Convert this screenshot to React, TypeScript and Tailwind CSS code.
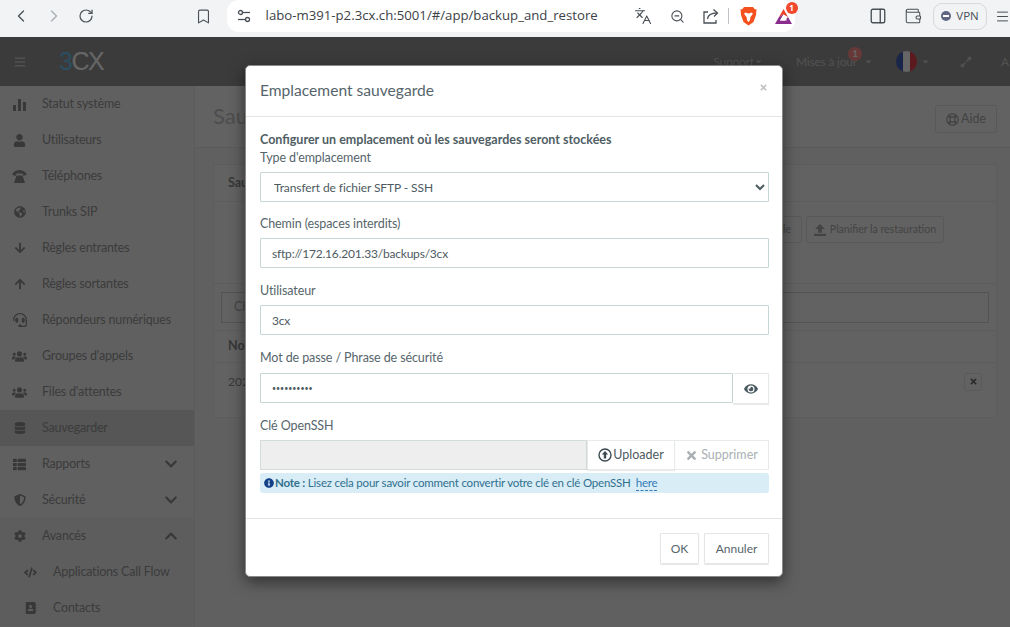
import { ReactNode } from "react";
import {
  FaArrowDown, FaArrowUp, FaChevronDown, FaChevronUp, FaCode, FaCog, FaDatabase, FaEye,
  FaGlobeAmericas, FaHeadset, FaInfoCircle, FaRegLifeRing, FaShieldAlt, FaTimes, FaUser,
  FaUsers, FaAddressBook, FaThList, FaBars, FaExpandAlt, FaCaretDown,
} from "react-icons/fa";
import { ChevronLeft, ChevronRight, RotateCw, Bookmark, Languages, ZoomOut, PanelRight, Wallet, Menu } from "lucide-react";

const PAGE_FONT = "font-['Lato','Noto_Sans',sans-serif]";

function StatsIcon() {
  return (
    <svg width="13" height="13" viewBox="0 0 13 13" fill="currentColor">
      <rect x="0" y="7" width="3" height="6" /><rect x="5" y="1" width="3" height="12" /><rect x="10" y="4" width="3" height="9" />
    </svg>
  );
}

function PhoneIcon() {
  return (
    <svg width="15" height="13" viewBox="0 0 15 13" fill="currentColor">
      <path d="M0 4.500C2 1 5 0 7.500 0S13 1 15 4.500L11.500 6 10.500 3.500h-6L3.500 6z" /><path d="M4.500 5.500h6L13 13H2z" />
    </svg>
  );
}

function UploadIcon() {
  return (
    <svg width="12" height="12" viewBox="0 0 11 11" fill="currentColor">
      <path d="M5.500 0L10 4.500H7.200V8H3.800V4.500H1z" /><rect x="0" y="9" width="11" height="2" />
    </svg>
  );
}

function UploadCircleIcon() {
  return (
    <svg width="14" height="14" viewBox="0 0 14 14">
      <circle cx="7" cy="7" r="6" fill="none" stroke="#3a4a50" strokeWidth="1.4" />
      <path d="M7 3l3.200 3.400H8.200V10.500H5.800V6.400H3.800z" fill="#3a4a50" />
    </svg>
  );
}

function SiteSettingsIcon() {
  return (
    <svg width="14" height="14" viewBox="0 0 14 14" fill="none" stroke="#4a5056" strokeWidth="1.3">
      <circle cx="3.500" cy="3.500" r="2" /><path d="M5.500 3.500H13" />
      <circle cx="10.500" cy="10.500" r="2" /><path d="M1 10.500h7.500" />
    </svg>
  );
}

function ShareIcon() {
  return (
    <svg width="18" height="18" viewBox="0 0 18 18" fill="none" stroke="#4a5056" strokeWidth="1.3">
      <path d="M6 5H2v11h12v-3" />
      <path d="M5.500 12C6 8 9 6 15 6" /><path d="M11.500 2.500L15.500 6l-3.500 3.500" />
    </svg>
  );
}

function BraveIcon() {
  return (
    <svg width="17" height="20" viewBox="0 0 17 20">
      <path d="M4 1h9l2 2.500 1.500-.5-.5 6-2.500 7-5 3.500L3.500 16 1 9 .5 3 2 3.500z" fill="#f4511e" />
      <path d="M5 6.500l3.500 1 3.500-1 .8 1.500-2.300 3-.7 3.500L8.500 16l-1.300-1.500-.7-3.500L4.200 8z" fill="#fff" />
    </svg>
  );
}

function BatIcon() {
  return (
    <svg width="19" height="17" viewBox="0 0 19 17">
      <path d="M9.500 1L18 16H1z" fill="#fff" />
      <path d="M9.500 1L14 9 9.500 6.500 5 9z" fill="#e8452c" />
      <path d="M1 16L5 9l4.500-2.500L6 12.500 11 12.500 14 9l4 7z" fill="#8b2c8f" />
      <path d="M6 12.500L9.500 6.500l3.500 6z" fill="#fff" />
    </svg>
  );
}

function NavItem({ icon, label, chevron, active, sub }: { icon: ReactNode; label: string; chevron?: "up" | "down"; active?: boolean; sub?: boolean }) {
  return (
    <div className={`flex h-9 items-center ${active ? "bg-[#d6d6d6]" : sub ? "bg-[#e9e9e9]" : ""}`}>
      <span className={`flex w-[15px] justify-center text-[#8c8c8c] ${sub ? "ml-[23px] mr-[15px]" : "ml-3 mr-[15px]"}`}>{icon}</span>
      <span className="flex-1 text-[12.5px] tracking-[-0.2px] text-[#969696]">{label}</span>
      {chevron === "down" && <FaChevronDown className="mr-4 text-[14px] text-[#8c8c8c]" />}
      {chevron === "up" && <FaChevronUp className="mr-4 text-[14px] text-[#8c8c8c]" />}
    </div>
  );
}

function Field({ label, value }: { label: string; value: string }) {
  return (
    <div>
      <div className="mb-[6px] text-[12.5px] leading-[16px] tracking-[-0.1px] text-[#56656b]">{label}</div>
      <input
        readOnly
        type="text"
        value={value}
        className="block h-[30px] w-full rounded-[1px] border border-[#c5d6d6] bg-white px-[11px] text-[12px] tracking-[-0.2px] text-[#4d5a5f] outline-none"
      />
    </div>
  );
}

export default function App() {
  return (
    <div className={`relative h-[627px] w-[1010px] overflow-hidden bg-white ${PAGE_FONT}`}>
      {/* browser toolbar */}
      <div className="flex h-[37px] items-start bg-[#f1f3f5] text-[#4a5056] font-['Open_Sans',sans-serif]">
        <div className="flex h-[32px] w-[228px] items-center">
          <ChevronLeft className="ml-[11px]" size={20} strokeWidth={1.6} />
          <ChevronRight className="ml-[13px] text-[#a8adb2]" size={20} strokeWidth={1.6} />
          <RotateCw className="ml-[14px]" size={16} strokeWidth={1.8} />
          <Bookmark className="ml-[101px]" size={17} strokeWidth={1.6} />
        </div>
        <div className="flex h-[32px] w-[572px] items-center rounded-[12px] bg-white">
          <span className="ml-[10px] flex"><SiteSettingsIcon /></span>
          <span className="ml-[15px] w-[367px] text-[13.2px] text-[#3c4146]">labo-m391-p2.3cx.ch:5001/#/app/backup_and_restore</span>
          <Languages className="ml-[1px]" size={18} strokeWidth={1.5} />
          <ZoomOut className="ml-[18px]" size={15} strokeWidth={1.8} />
          <span className="ml-[17px] flex"><ShareIcon /></span>
          <span className="ml-[8px] h-4 w-px bg-[#bfc3c7]" />
          <span className="ml-[11px] flex"><BraveIcon /></span>
          <span className="relative ml-[17px] flex">
            <BatIcon />
            <span className="absolute -right-[5px] -top-[6px] flex h-[12px] w-[12px] items-center justify-center rounded-full bg-[#f2492c] text-[8px] font-bold text-white">1</span>
          </span>
        </div>
        <div className="flex h-[32px] items-center">
          <PanelRight className="ml-[74px]" size={18} strokeWidth={1.8} />
          <Wallet className="ml-[17px]" size={18} strokeWidth={1.4} />
          <div className="ml-[11px] flex h-[27px] w-[54px] items-center justify-center gap-[5px] rounded-[9px] border border-[#d5dade] text-[11.5px]">
            <span className="relative h-[10px] w-[10px] rounded-full bg-[#5f6785]">
              <span className="absolute left-[2px] top-[4px] h-[2px] w-[6px] bg-white" />
            </span>
            VPN
          </div>
          <Menu className="ml-[8px]" size={15} strokeWidth={1.6} />
        </div>
      </div>

      {/* 3CX page, lies under the overlay */}
      <div className="flex h-[49px] items-center bg-[#939393]">
        <FaBars className="ml-[14px] text-[12px] text-[#c9c9c9]" />
        <div className="ml-[33px] text-[25px] font-normal leading-none tracking-[-1.500px] font-['Liberation_Sans',sans-serif]">
          <span className="text-[#6fc0ef]">3</span><span className="text-white">CX</span>
        </div>
        <div className="ml-auto flex items-center text-[12px] tracking-[-0.2px] text-[#cbcbcb]">
          <span>Support</span>
          <FaCaretDown className="text-[9px]" />
          <span className="relative ml-[33px]">
            Mises à jour
            <span className="absolute -right-[5px] -top-[6px] flex h-[14px] w-[14px] items-center justify-center rounded-full bg-[#ff8f8c] text-[9px] font-bold text-white">1</span>
          </span>
          <FaCaretDown className="ml-[7px] text-[9px]" />
          <span className="ml-[23px] flex h-[21px] w-[21px] overflow-hidden rounded-full">
            <span className="w-1/3 bg-[#3f5fb8]" /><span className="w-1/3 bg-white" /><span className="w-1/3 bg-[#e8424d]" />
          </span>
          <FaCaretDown className="ml-[4px] text-[9px]" />
          <FaExpandAlt className="ml-[30px] text-[12px]" />
          <span className="ml-[29px] w-[9px] overflow-hidden">A</span>
        </div>
      </div>

      <div className="flex h-[541px]">
        <aside className="w-[194px] shrink-0 bg-[#f1f1f1]">
          <NavItem icon={<StatsIcon />} label="Statut système" />
          <NavItem icon={<FaUser className="text-[13px]" />} label="Utilisateurs" />
          <NavItem icon={<PhoneIcon />} label="Téléphones" />
          <NavItem icon={<FaGlobeAmericas className="text-[12px]" />} label="Trunks SIP" />
          <NavItem icon={<FaArrowDown className="text-[12px]" />} label="Règles entrantes" />
          <NavItem icon={<FaArrowUp className="text-[12px]" />} label="Règles sortantes" />
          <NavItem icon={<FaHeadset className="text-[14px]" />} label="Répondeurs numériques" />
          <NavItem icon={<FaUsers className="text-[15px]" />} label="Groupes d'appels" />
          <NavItem icon={<FaUsers className="text-[19px]" />} label="Files d'attentes" />
          <NavItem icon={<FaDatabase className="text-[12px]" />} label="Sauvegarder" active />
          <NavItem icon={<FaThList className="text-[13px]" />} label="Rapports" chevron="down" />
          <NavItem icon={<FaShieldAlt className="text-[12px]" />} label="Sécurité" chevron="down" />
          <div className="bg-[#e9e9e9]">
            <NavItem icon={<FaCog className="text-[12px]" />} label="Avancés" chevron="up" />
          </div>
          <NavItem icon={<FaCode className="text-[13px]" />} label="Applications Call Flow" sub />
          <NavItem icon={<FaAddressBook className="text-[12px]" />} label="Contacts" sub />
        </aside>

        <main className="flex-1 border-l border-[#e4e4e4] bg-[#f1f1f1]">
          <div className="flex h-[62px] items-start justify-between border-b border-[#e4e4e4] bg-[#f6f6f6] pl-[18px] pr-[13px] pt-[18px]">
            <h1 className="text-[22px] leading-[24px] text-[#c0c0c0]">Sauvegarder</h1>
            <button className="mt-[1px] flex h-[28px] w-[62px] items-center justify-center gap-[2px] rounded-[2px] border border-[#dfdfdf] text-[12.5px] text-[#a8a8a8]">
              <FaRegLifeRing className="text-[13px]" />Aide
            </button>
          </div>

          <section className="ml-[18px] mr-[13px] mt-[16px] h-[254px] border border-[#e7e7e7] bg-[#f6f6f6]">
            <div className="flex h-[37px] items-center border-b border-[#e7e7e7] px-[14px] text-[12.5px] font-bold text-[#8c8c8c]">Sauvegarder</div>
            <div className="h-[82px] border-b border-[#e7e7e7] px-[14px] pt-[14px]">
              <div className="flex justify-end gap-[4px] pr-[38px]">
                <button className="h-[27px] rounded-[2px] border border-[#dfdfdf] px-[10px] text-[10.5px] text-[#a8a8a8]">Restaurer une sauvegarde</button>
                <button className="flex h-[27px] w-[138px] items-center justify-center gap-[4px] rounded-[2px] border border-[#dfdfdf] text-[10.5px] text-[#a8a8a8]">
                  <UploadIcon />Planifier la restauration
                </button>
              </div>
            </div>
            <div className="h-[47px] border-b border-[#e7e7e7] px-[7px] pt-[8px]">
              <div className="flex h-[31px] items-center border border-[#cfcfcf] px-[12px] text-[12.5px] text-[#a8a8a8]">Chercher...</div>
            </div>
            <div className="flex h-[32px] items-center border-b border-[#e7e7e7] px-[14px] text-[12.5px] font-bold text-[#8c8c8c]">Nom</div>
            <div className="flex h-[36px] items-center justify-between pl-[14px] pr-[14px] pt-[1px] text-[12px] text-[#8c8c8c]">
              <span>2024-01-01</span>
              <button className="flex h-[18px] w-[18px] items-center justify-center rounded-[2px] border border-[#e2e2e2]"><FaTimes className="text-[9px] text-[#6c6c6c]" /></button>
            </div>
          </section>
        </main>
      </div>

      {/* modal overlay */}
      <div className="absolute inset-x-0 bottom-0 top-[37px] bg-black/60" />

      <div className="absolute left-[245px] top-[65px] w-[538px] rounded-[5px] border border-[#8a8a8a] bg-white shadow-[0_5px_15px_rgba(0,0,0,0.5)]">
        <div className="relative flex h-[51px] items-center border-b border-[#e5e5e5] pl-[14px]">
          <h2 className="text-[15.6px] text-[#56656b]">Emplacement sauvegarde</h2>
          <FaTimes className="absolute right-[14px] top-[17px] text-[9px] text-[#c4c4c4]" />
        </div>

        <div className="h-[401px] pl-[14px] pr-[13px] pt-[15px]">
          <div className="text-[12.5px] font-bold leading-[16px] text-[#4f5e64]">Configurer un emplacement où les sauvegardes seront stockées</div>
          <div className="mt-[2px] text-[12.5px] leading-[16px] tracking-[-0.1px] text-[#56656b]">Type d'emplacement</div>
          <select className="mt-[6px] block h-[30px] w-full rounded-[1px] border border-[#c5d6d6] bg-white px-[9px] text-[12px] tracking-[-0.1px] text-[#4d5a5f] outline-none">
            <option>Transfert de fichier SFTP - SSH</option>
          </select>

          <div className="mt-[14px] flex flex-col gap-[15px]">
            <Field label="Chemin (espaces interdits)" value="sftp://172.16.201.33/backups/3cx" />
            <Field label="Utilisateur" value="3cx" />
            <div>
              <div className="mb-[7px] text-[12.5px] leading-[16px] tracking-[-0.1px] text-[#56656b]">Mot de passe / Phrase de sécurité</div>
              <div className="flex">
                <input readOnly type="password" value="abcdefghij" className="block h-[30px] flex-1 rounded-[1px] border border-[#c5d6d6] px-[11px] text-[7px] text-[#4d5a5f] outline-none" />
                <button className="flex h-[31px] w-[36px] items-center justify-center border border-l-0 border-[#e3e9e9] shadow-[0_1px_1px_rgba(0,0,0,0.08)]">
                  <FaEye className="text-[14px] text-[#4a5a60]" />
                </button>
              </div>
            </div>
          </div>

          <div className="mt-[14px] text-[12.5px] leading-[16px] tracking-[-0.1px] text-[#56656b]">Clé OpenSSH</div>
          <div className="mt-[6px] flex h-[30px]">
            <div className="w-[327px] border border-[#d3dbdb] bg-[#eeeeee]" />
            <button className="flex w-[88px] items-center justify-center gap-[1px] border border-[#e6eaea] text-[12.5px] text-[#4d5a5f] shadow-[0_1px_1px_rgba(0,0,0,0.08)]">
              <UploadCircleIcon />Uploader
            </button>
            <button className="flex flex-1 items-center justify-center gap-[3px] border border-l-0 border-[#e6eaea] text-[12.5px] text-[#a9b0b3]">
              <FaTimes className="text-[13px]" />Supprimer
            </button>
          </div>
          <div className="mt-[3px] flex h-[20px] items-center rounded-[3px] bg-[#d9edf7] pl-[4px] text-[11.5px] tracking-[-0.2px] text-[#31708f]">
            <FaInfoCircle className="mr-[1px] text-[10px] text-[#12418a]" />
            <span><span className="font-bold">Note :</span> Lisez cela pour savoir comment convertir votre clé en clé OpenSSH</span>
            <span className="ml-[5px] border-b border-dashed border-[#337ab7] leading-[14px] text-[#337ab7]">here</span>
          </div>
        </div>

        <div className="flex h-[58px] items-start justify-end gap-[5px] border-t border-[#e5e5e5] pr-[13px] pt-[14px]">
          <button className="h-[31px] w-[39px] rounded-[1px] border border-[#e3e6e6] text-[12px] text-[#56656b] shadow-[0_1px_1px_rgba(0,0,0,0.1)]">OK</button>
          <button className="h-[31px] w-[65px] rounded-[1px] border border-[#e3e6e6] text-[12px] text-[#56656b] shadow-[0_1px_1px_rgba(0,0,0,0.1)]">Annuler</button>
        </div>
      </div>
    </div>
  );
}
